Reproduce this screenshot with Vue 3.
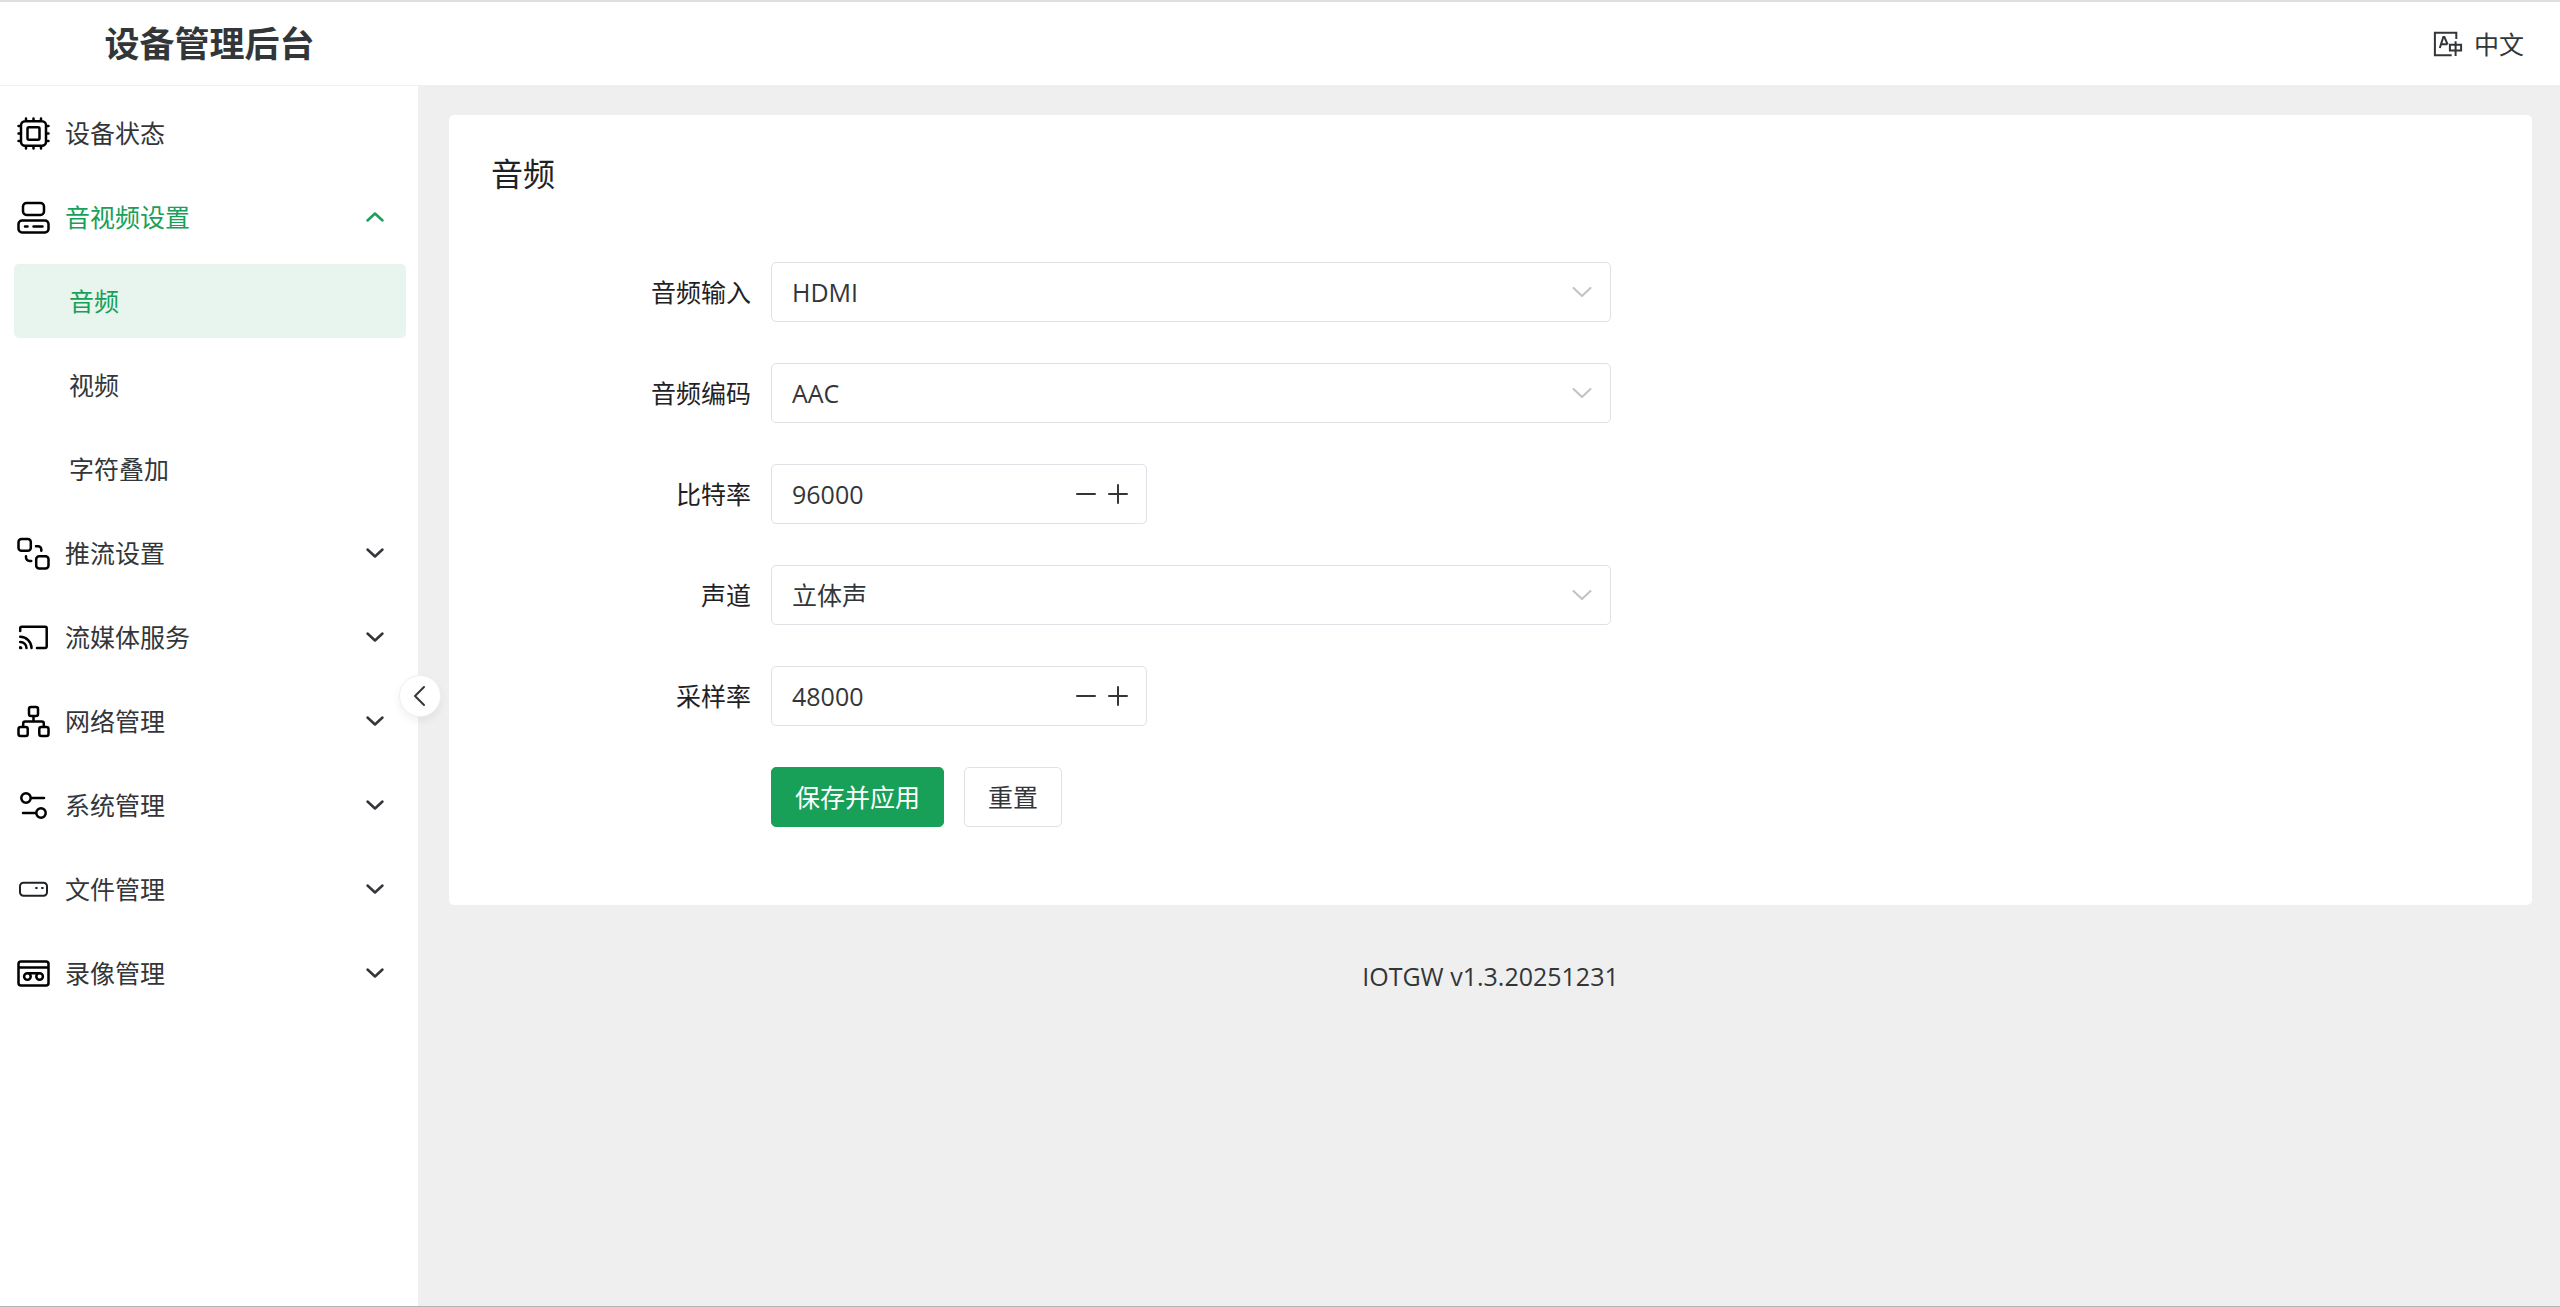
<template>
  <div class="app">
    <header class="header">
      <h1 class="logo">设备管理后台</h1>
      <button class="lang-btn" type="button">
        <svg class="lang-icon" viewBox="0 0 32 32" aria-hidden="true">
          <path d="M24.3 11V4.7H2.9v22.6h16.8" />
          <path d="M7.8 20l3.5-11h1.1l3.2 7.4M9 16.2h6.4" />
          <path d="M17.9 16.8h11.2v5.8H17.9zM23.6 13.3V28" />
        </svg>
        <span>中文</span>
      </button>
    </header>

    <div class="body">
      <aside class="sider">
        <nav>
          <ul class="menu">
            <li v-for="item in menu" :key="item.key">
              <button
                class="menu-item"
                :class="{ 'menu-item--current': item.key === currentGroup }"
                type="button"
                :aria-expanded="item.children ? item.key === opened : undefined"
                @click="toggle(item)"
              >
                <svg class="menu-icon" viewBox="0 0 35 35" aria-hidden="true">
                  <path :class="{ thin: item.thin }" :d="item.icon" />
                </svg>
                <span class="menu-label">{{ item.label }}</span>
                <svg
                  v-if="item.children"
                  class="menu-arrow"
                  :class="{ 'menu-arrow--up': item.key === opened }"
                  viewBox="0 0 28 28"
                  aria-hidden="true"
                >
                  <path d="M6.5 10.5l7.5 7 7.5-7" />
                </svg>
              </button>
              <ul v-if="item.children && item.key === opened" class="submenu">
                <li v-for="child in item.children" :key="child.key">
                  <a
                    class="submenu-item"
                    :class="{ 'submenu-item--active': child.key === active }"
                    href="#"
                    @click.prevent="active = child.key"
                  >{{ child.label }}</a>
                </li>
              </ul>
            </li>
          </ul>
        </nav>
        <button class="collapse-btn" type="button" aria-label="收起菜单">
          <svg viewBox="0 0 28 28" aria-hidden="true">
            <path d="M18 5L9 14l9 9" />
          </svg>
        </button>
      </aside>

      <main class="content">
        <section class="card">
          <h2 class="card-title">音频</h2>
          <form class="form" @submit.prevent>
            <div v-for="field in fields" :key="field.key" class="form-row">
              <label class="form-label" :for="field.key">{{ field.label }}</label>
              <div v-if="field.options" class="select">
                <select :id="field.key" v-model="form[field.key]">
                  <option v-for="opt in field.options" :key="opt">{{ opt }}</option>
                </select>
                <svg class="select-arrow" viewBox="0 0 28 28" aria-hidden="true">
                  <path d="M5.5 10l8.5 8 8.5-8" />
                </svg>
              </div>
              <div v-else class="number">
                <input :id="field.key" v-model.number="form[field.key]" type="text" inputmode="numeric">
                <button type="button" aria-label="减少" @click="form[field.key] -= field.step">
                  <svg viewBox="0 0 32 32" aria-hidden="true"><path d="M7 16h18" /></svg>
                </button>
                <button type="button" aria-label="增加" @click="form[field.key] += field.step">
                  <svg viewBox="0 0 32 32" aria-hidden="true"><path d="M7 16h18M16 7v18" /></svg>
                </button>
              </div>
            </div>
            <div class="form-row">
              <div class="form-actions">
                <button class="btn btn--primary" type="submit">保存并应用</button>
                <button class="btn" type="button" @click="reset">重置</button>
              </div>
            </div>
          </form>
        </section>
        <footer class="footer">IOTGW v1.3.20251231</footer>
      </main>
    </div>
  </div>
</template>

<script setup>
import { reactive, ref } from "vue"

const menu = [
  {
    key: "status",
    label: "设备状态",
    icon: "M9 5.2h17a4 4 0 0 1 4 4v16.6a4 4 0 0 1-4 4H9a4 4 0 0 1-4-4V9.2a4 4 0 0 1 4-4zM13 11.3h9a1.500 1.500 0 0 1 1.500 1.500v9.400a1.500 1.500 0 0 1-1.500 1.500h-9a1.500 1.500 0 0 1-1.500-1.500v-9.400a1.500 1.500 0 0 1 1.500-1.500zM10 2.500v2M17.500 2.500v2M25 2.500v2M10 30.500v2M17.500 30.500v2M25 30.500v2M2.500 10h2M2.500 17.500h2M2.500 25h2M30.500 10h2M30.500 17.500h2M30.500 25h2",
  },
  {
    key: "av",
    label: "音视频设置",
    icon: "M10.5 3h14a3.5 3.5 0 0 1 3.5 3.5v5a3.5 3.5 0 0 1-3.5 3.5h-14a3.5 3.5 0 0 1-3.5-3.5v-5a3.5 3.5 0 0 1 3.5-3.5zM6 20.5h23a3.5 3.5 0 0 1 3.5 3.5v5a3.5 3.5 0 0 1-3.5 3.5H6a3.5 3.5 0 0 1-3.5-3.5v-5a3.5 3.5 0 0 1 3.5-3.5zM9 26.5h2.5M17.5 26.5h9",
    children: [
      { key: "audio", label: "音频" },
      { key: "video", label: "视频" },
      { key: "osd", label: "字符叠加" },
    ],
  },
  {
    key: "push",
    label: "推流设置",
    icon: "M5.5 2.9h6.3a3 3 0 0 1 3 3v5.8a3 3 0 0 1-3 3H5.500a3 3 0 0 1-3-3V5.9a3 3 0 0 1 3-3zM23.2 20.3h6.3a3 3 0 0 1 3 3v6.2a3 3 0 0 1-3 3h-6.3a3 3 0 0 1-3-3v-6.2a3 3 0 0 1 3-3zM20 10.2h2a3.3 3.3 0 0 1 3.3 3.3v1.3M10 20.2v1.3a3.5 3.5 0 0 0 3.5 3.5h1.7",
    children: [],
  },
  {
    key: "media",
    label: "流媒体服务",
    icon: "M4.2 11V8.2a1.5 1.5 0 0 1 1.5-1.5h23.5a1.5 1.5 0 0 1 1.5 1.5v18.3a1.5 1.5 0 0 1-1.5 1.5H21M4.2 16.8a11.2 11.2 0 0 1 11.3 11.2M4.2 21.9a6.3 6.3 0 0 1 6.3 6.1M4.2 27.3a1 1 0 0 1 1 .8h-1z",
    children: [],
  },
  {
    key: "network",
    label: "网络管理",
    icon: "M15 2.9h5a2 2 0 0 1 2 2v5.2a2 2 0 0 1-2 2h-5a2 2 0 0 1-2-2V4.9a2 2 0 0 1 2-2zM4.5 22.9h5.2a2 2 0 0 1 2 2v5.2a2 2 0 0 1-2 2H4.5a2 2 0 0 1-2-2v-5.2a2 2 0 0 1 2-2zM25.3 22.9h5.2a2 2 0 0 1 2 2v5.2a2 2 0 0 1-2 2h-5.2a2 2 0 0 1-2-2v-5.2a2 2 0 0 1 2-2zM17.5 12.5v5M7.2 22.5v-3a2 2 0 0 1 2-2h16.6a2 2 0 0 1 2 2v3",
    children: [],
  },
  {
    key: "system",
    label: "系统管理",
    icon: "M14.7 10a4.7 4.7 0 1 1-9.4 0a4.7 4.7 0 1 1 9.4 0zM15 10h13M29.7 25a4.7 4.7 0 1 1-9.4 0a4.7 4.7 0 1 1 9.4 0zM7 25h13",
    children: [],
  },
  {
    key: "file",
    label: "文件管理",
    thin: true,
    icon: "M7.5 10.8h20a3.5 3.5 0 0 1 3.5 3.5v6a3.5 3.5 0 0 1-3.5 3.5h-20a3.5 3.5 0 0 1-3.5-3.5v-6a3.5 3.5 0 0 1 3.5-3.5zM20 16h.8M26 16h.8",
    children: [],
  },
  {
    key: "record",
    label: "录像管理",
    icon: "M5 5.5h25a2.5 2.5 0 0 1 2.5 2.5v19a2.5 2.5 0 0 1-2.5 2.5H5a2.5 2.5 0 0 1-2.5-2.5V8a2.5 2.5 0 0 1 2.5-2.5zM2.5 11.5h30M14.7 20.5a3.3 3.3 0 1 1-6.6 0a3.3 3.3 0 1 1 6.6 0zM26.9 20.5a3.3 3.3 0 1 1-6.6 0a3.3 3.3 0 1 1 6.6 0zM11.4 17.2h12.2",
    children: [],
  },
]

const currentGroup = "av"
const opened = ref("av")
const active = ref("audio")

function toggle(item) {
  if (!item.children) return
  opened.value = opened.value === item.key ? "" : item.key
}

const fields = [
  { key: "input", label: "音频输入", options: ["HDMI", "LINE IN"] },
  { key: "codec", label: "音频编码", options: ["AAC", "G711A"] },
  { key: "bitrate", label: "比特率", step: 1000 },
  { key: "channel", label: "声道", options: ["立体声", "单声道"] },
  { key: "sampleRate", label: "采样率", step: 1000 },
]

const defaults = {
  input: "HDMI",
  codec: "AAC",
  bitrate: 96000,
  channel: "立体声",
  sampleRate: 48000,
}

const form = reactive({ ...defaults })

function reset() {
  Object.assign(form, defaults)
}
</script>

<style>
  body {
    margin: 0;
  }
</style>

<style scoped>
  .app {
    box-sizing: border-box;
    display: flex;
    flex-direction: column;
    min-height: 100vh;
    border-top: 2px solid #e0e0e0;
    border-bottom: 1px solid #b4b4b4;
    background: #fff;
    color: #333639;
    font-family: "Open Sans", "Noto Sans CJK SC", sans-serif;
    font-size: 25px;
    line-height: 38px;
  }

  .app * {
    box-sizing: border-box;
  }

  button,
  input,
  select {
    font: inherit;
    color: inherit;
  }

  button {
    cursor: pointer;
  }

  svg {
    display: block;
    fill: none;
    stroke: currentColor;
    stroke-linecap: round;
    stroke-linejoin: round;
  }

  .header {
    display: flex;
    align-items: center;
    justify-content: space-between;
    height: 84px;
    padding-right: 36px;
    border-bottom: 1px solid #efeff5;
  }

  .logo {
    width: 419px;
    margin: 0;
    font-size: 35px;
    font-weight: 700;
    text-align: center;
  }

  .lang-btn {
    display: flex;
    align-items: center;
    gap: 10px;
    padding: 0;
    border: none;
    background: transparent;
  }

  .lang-icon {
    width: 32px;
    height: 32px;
    stroke-width: 2;
    stroke-linecap: butt;
    stroke-linejoin: miter;
  }

  .body {
    flex: 1;
    display: flex;
  }

  .sider {
    position: relative;
    flex: none;
    width: 419px;
    border-right: 1px solid #efeff5;
  }

  .menu,
  .submenu {
    display: flex;
    flex-direction: column;
    gap: 10px;
    margin: 0;
    padding: 0;
    list-style: none;
  }

  .menu {
    padding: 10px 12px 10px 14px;
  }

  .submenu {
    margin-top: 10px;
  }

  .menu-item {
    display: flex;
    align-items: center;
    width: 100%;
    height: 74px;
    padding: 0 17px 0 2px;
    border: none;
    background: transparent;
    text-align: left;
  }

  .menu-item--current {
    color: #18a058;
  }

  .menu-icon {
    width: 35px;
    height: 35px;
    margin-right: 14px;
    color: #000;
    stroke-width: 2.5;
  }

  .menu-icon .thin {
    stroke: #1f2225;
    stroke-width: 2;
  }

  .menu-label {
    flex: 1;
  }

  .menu-arrow {
    width: 28px;
    height: 28px;
    stroke-width: 2.5;
  }

  .menu-arrow--up {
    transform: rotate(180deg);
  }

  .submenu-item {
    display: flex;
    align-items: center;
    height: 74px;
    padding-left: 55px;
    border-radius: 5px;
    color: inherit;
    text-decoration: none;
  }

  .submenu-item--active {
    background: #e7f5ee;
    color: #18a058;
  }

  .collapse-btn {
    position: absolute;
    top: 50%;
    right: -23px;
    display: flex;
    align-items: center;
    justify-content: center;
    width: 42px;
    height: 42px;
    padding: 0;
    border: 1px solid #efeff5;
    border-radius: 50%;
    background: #fff;
    box-shadow: 0 4px 8px rgba(0, 0, 0, 0.06);
    transform: translateY(-50%);
  }

  .collapse-btn svg {
    width: 28px;
    height: 28px;
    stroke-width: 2;
  }

  .content {
    flex: 1;
    min-width: 0;
    padding: 29px 28px 29px 30px;
    background: #efefef;
  }

  .card {
    padding: 34px 42px 78px;
    border-radius: 5px;
    background: #fff;
  }

  .card-title {
    margin: 0 0 63px;
    color: #1f2225;
    font-size: 32px;
    font-weight: 400;
    line-height: 50px;
  }

  .form {
    display: flex;
    flex-direction: column;
    gap: 41px;
    max-width: 1120px;
  }

  .form-row {
    display: grid;
    grid-template-columns: 260px 1fr;
    align-items: center;
    column-gap: 20px;
  }

  .form-label {
    color: #1f2225;
    text-align: right;
  }

  .select {
    position: relative;
  }

  .select select {
    display: block;
    width: 100%;
    height: 60px;
    padding: 0 62px 0 20px;
    border: 1px solid #e0e0e6;
    border-radius: 5px;
    background: #fff;
    appearance: none;
  }

  .select-arrow {
    position: absolute;
    top: 16px;
    right: 15px;
    width: 28px;
    height: 28px;
    color: #c2c2c2;
    stroke-width: 2;
    pointer-events: none;
  }

  .number {
    display: flex;
    align-items: center;
    width: 376px;
    height: 60px;
    padding: 0 12px 0 20px;
    border: 1px solid #e0e0e6;
    border-radius: 5px;
  }

  .number input {
    flex: 1;
    min-width: 0;
    padding: 0;
    border: none;
    background: transparent;
    outline: none;
  }

  .number button {
    padding: 0;
    border: none;
    background: transparent;
  }

  .number svg {
    width: 32px;
    height: 32px;
    stroke-width: 2;
  }

  .form-actions {
    grid-column: 2;
    display: flex;
    gap: 20px;
  }

  .btn {
    height: 60px;
    padding: 0 23px;
    border: 1px solid #e0e0e6;
    border-radius: 5px;
    background: #fff;
  }

  .btn--primary {
    border-color: #18a058;
    background: #18a058;
    color: #fff;
  }

  .footer {
    padding: 52px 0;
    text-align: center;
  }
</style>
